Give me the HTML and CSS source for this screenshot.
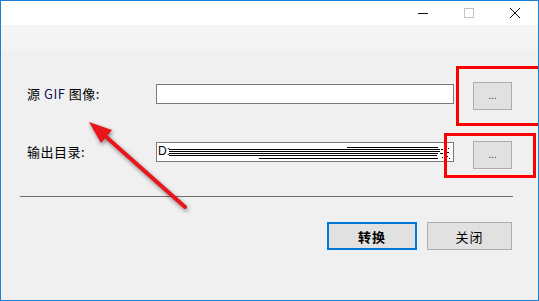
FILE: index.html
```html
<!DOCTYPE html>
<html>
<head>
<meta charset="utf-8">
<link rel="stylesheet" href="styles.css">
</head>
<body>
<div class="window">
  <div class="titlebar">
    <div class="ctl"><svg width="10" height="10" viewBox="0 0 10 10"><path d="M0 5.5H10" stroke="#111" stroke-width="1"/></svg></div>
    <div class="ctl"><svg width="10" height="10" viewBox="0 0 10 10"><rect x="0.5" y="0.5" width="9" height="9" fill="none" stroke="#c4c4c4"/></svg></div>
    <div class="ctl"><svg width="10" height="10" viewBox="0 0 10 10"><path d="M0 0L10 10M10 0L0 10" stroke="#111" stroke-width="1"/></svg></div>
  </div>
  <div class="band"></div>
  <div class="content">
    <div class="row row1">
      <div class="label">源 <span class="gif">GIF</span> 图像:</div>
      <div class="textbox"></div>
      <div class="btn small">...</div>
    </div>
    <div class="row row2">
      <div class="label">输出目录:</div>
      <div class="textbox tb2">
        <span class="dtext">D:</span>
        <svg class="garble" width="296" height="18" viewBox="0 0 296 18">
          <g stroke="#000" stroke-width="1">
            <path d="M190 4.5H281"/>
            <path d="M12 6.5H283"/>
            <path d="M12 8.5H283"/>
            <path d="M12 10.5H281"/>
            <path d="M12 12.5H280"/>
            <path d="M102 15.5H281"/>
          </g>
          <g fill="#000">
            <rect x="284" y="6" width="2" height="1"/><rect x="289" y="4" width="1" height="1"/><rect x="291" y="5" width="1" height="1"/>
            <rect x="283" y="10" width="3" height="1"/><rect x="288" y="9" width="4" height="1"/><rect x="287" y="12" width="1" height="1"/>
            <rect x="290" y="13" width="1" height="1"/><rect x="292" y="15" width="1" height="1"/><rect x="285" y="14" width="1" height="1"/>
          </g>
        </svg>
      </div>
      <div class="btn small">...</div>
    </div>
    <div class="sep"></div>
    <div class="actions">
      <div class="btn primary">转换</div>
      <div class="btn close">关闭</div>
    </div>
  </div>
  <div class="mark mark1"></div>
  <div class="mark mark2"></div>
  <svg class="arrow" width="539" height="301" viewBox="0 0 539 301">
    <g class="arrowg">
      <path d="M185 207L104 135" stroke="#e8151b" stroke-width="4" stroke-linecap="round"/>
      <path d="M89 122L112 130L101 143Z" fill="#e8151b"/>
    </g>
  </svg>
</div>
</body>
</html>
```
FILE: styles.css
```css
html, body {
  margin: 0;
  padding: 0;
  background: #f0f0f0;
}
.window {
  width: 539px;
  height: 301px;
  box-sizing: border-box;
  border: 1px solid #1a7fd6;
  background: #f0f0f0;
  position: relative;
  overflow: hidden;
  font-family: "Noto Sans CJK SC", "Liberation Sans", sans-serif;
  font-size: 13px;
  color: #000;
}
.titlebar {
  height: 24px;
  background: #fff;
  display: flex;
  justify-content: flex-end;
}
.ctl {
  width: 46px;
  height: 24px;
  display: flex;
  align-items: center;
  justify-content: center;
}
.ctl svg { display: block; }
.band {
  height: 25px;
  background: linear-gradient(#f5f5f5, #f3f3f3);
}
.content {
  display: flex;
  flex-direction: column;
}
.row {
  display: flex;
  align-items: flex-start;
  padding-left: 26px;
  height: 28px;
}
.row1 { margin-top: 32px; }
.row2 { margin-top: 31px; }
.label {
  width: 129px;
  height: 20px;
  line-height: 20px;
  white-space: nowrap;
  letter-spacing: 0.5px;
}
.row1 .label { margin-top: 2px; }
.row2 .label { margin-top: 1px; }
.gif { color: #101050; }
.textbox {
  width: 298px;
  height: 20px;
  box-sizing: border-box;
  border: 1px solid #7a7a7a;
  background: #fff;
  position: relative;
}
.row1 .textbox { margin-top: 2px; }
.row2 .textbox { margin-top: 1px; }
.dtext {
  position: absolute;
  left: 1px;
  top: 0;
  line-height: 17px;
  font-family: "Liberation Sans", sans-serif;
  font-size: 12px;
}
.garble {
  position: absolute;
  left: 0;
  top: 0;
  display: block;
}
.btn {
  box-sizing: border-box;
  height: 28px;
  background: #e1e1e1;
  border: 1px solid #adadad;
  display: flex;
  align-items: center;
  justify-content: center;
  letter-spacing: 1px;
}
.small {
  width: 39px;
  margin-left: 19px;
  font-family: "Liberation Sans", sans-serif;
  font-size: 10px;
  color: #333;
  padding-bottom: 2px;
  letter-spacing: 0;
}
.sep {
  margin: 27px 0 0 19px;
  width: 493px;
  height: 1px;
  background: #6e6e6e;
}
.actions {
  margin-top: 25px;
  display: flex;
  justify-content: flex-end;
  gap: 10px;
  padding-right: 26px;
}
.primary {
  width: 90px;
  border: 2px solid #0078d7;
  font-weight: bold;
}
.close {
  width: 85px;
}
.mark {
  position: absolute;
  border: 3px solid #ff0000;
  box-sizing: border-box;
}
.mark1 {
  left: 455px;
  top: 65px;
  width: 90px;
  height: 60px;
}
.mark2 {
  left: 443px;
  top: 132px;
  width: 92px;
  height: 45px;
}
.arrow {
  position: absolute;
  left: -1px;
  top: -1px;
  pointer-events: none;
}
.arrowg {
  filter: drop-shadow(1px 2px 2px rgba(0, 0, 0, 0.45));
}
```
